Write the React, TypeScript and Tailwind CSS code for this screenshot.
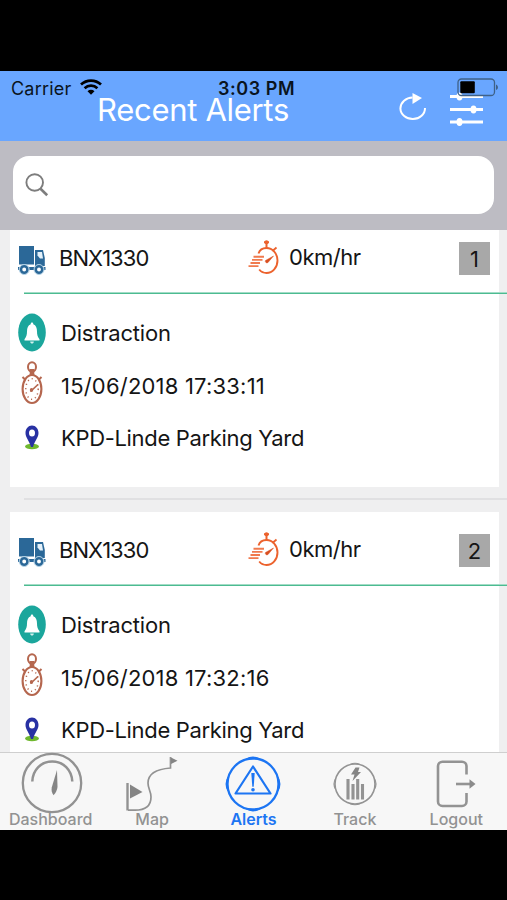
import { JSX, ReactNode } from "react";

type Alert = {
  id: number;
  vehicle: string;
  speed: string;
  type: string;
  time: string;
  place: string;
};

const alerts: Alert[] = [
  {
    id: 1,
    vehicle: "BNX1330",
    speed: "0km/hr",
    type: "Distraction",
    time: "15/06/2018 17:33:11",
    place: "KPD-Linde Parking Yard",
  },
  {
    id: 2,
    vehicle: "BNX1330",
    speed: "0km/hr",
    type: "Distraction",
    time: "15/06/2018 17:32:16",
    place: "KPD-Linde Parking Yard",
  },
];

function WifiIcon() {
  return (
    <svg width="22" height="16" viewBox="0 0 22 16" fill="none" stroke="#000" strokeWidth="2.7">
      <path d="M1 5.6a14.5 14.5 0 0 1 20 0" />
      <path d="M4.6 9.3a9.2 9.2 0 0 1 12.8 0" />
      <path d="M11 15.8l-3.5-3.6a5 5 0 0 1 7 0z" fill="#000" stroke="none" />
    </svg>
  );
}

function BatteryIcon() {
  return (
    <svg width="42" height="19" viewBox="0 0 42 19">
      <rect x="1" y="1" width="36.5" height="16.5" rx="3.5" fill="none" stroke="#3f6187" strokeWidth="1.3" />
      <rect x="3.3" y="3.3" width="14.5" height="12" rx="1" fill="#000" />
      <path d="M39 6.5c2.6 1 2.6 4.6 0 5.6z" fill="#3f6187" />
    </svg>
  );
}

function RefreshIcon() {
  return (
    <svg width="28" height="28" viewBox="0 0 28 28">
      <path d="M13.5 4.5A12.3 11.3 0 0 0 1.4 15.5a12.3 10.8 0 0 0 24.6-.5" fill="none" stroke="#fff" strokeWidth="2" />
      <path d="M13.5 0l9.5 5-9.5 6z" fill="#fff" />
    </svg>
  );
}

function SlidersIcon() {
  return (
    <svg width="33" height="36" viewBox="0 0 33 36" fill="#fff">
      <path d="M0 4h33v3H0zM0 17h33v3H0zM0 29.5h33v3H0z" />
      <ellipse cx="9.5" cy="5.5" rx="3" ry="4" />
      <ellipse cx="23.5" cy="18.5" rx="3" ry="4" />
      <ellipse cx="9.5" cy="31" rx="3" ry="4" />
    </svg>
  );
}

function SearchIcon() {
  return (
    <svg width="24" height="24" viewBox="0 0 24 24" fill="none" stroke="#7d7d7d">
      <circle cx="9.7" cy="9.5" r="8.3" strokeWidth="1.9" />
      <path d="M15.5 15.7l6.7 6.5" strokeWidth="2.6" />
    </svg>
  );
}

function TruckIcon() {
  return (
    <svg width="28" height="30" viewBox="0 0 28 30">
      <path d="M1 1h15v18.5H1z" fill="#2b6898" />
      <path d="M17 5h8l1.8 8v8H17z" fill="#2b6898" />
      <path d="M19.5 7H24l1 6.500h-3l-2.500-3z" fill="#e4f1fa" />
      <path d="M0 22h27.500v3H0z" fill="#2b6898" />
      <g fill="#fff" stroke="#a8cbe2" strokeWidth="1">
        <circle cx="6.2" cy="24.5" r="5" />
        <circle cx="21" cy="24.5" r="5" />
      </g>
      <g fill="#fff" stroke="#2b6898" strokeWidth="2.5">
        <circle cx="6.2" cy="24.5" r="3.2" />
        <circle cx="21" cy="24.5" r="3.2" />
      </g>
    </svg>
  );
}

function SpeedIcon() {
  return (
    <svg width="32" height="36" viewBox="0 0 32 36" fill="none" stroke="#ec622d" strokeWidth="1.9">
      <path d="M10.5 13.5c1-3.3 4-5.5 8-5.5 6 0 11 5.500 11 12.500S24.500 33 18.500 33c-3 0-5.500-1.300-7.300-3.500" />
      <path d="M18.5 2v6M16 2.300h5" strokeWidth="2" />
      <circle cx="18.5" cy="2.3" r="2" fill="#ec622d" stroke="none" />
      <path d="M24.5 11l4-3.500" strokeWidth="1.8" />
      <path d="M5.500 16.800H16M4 19.900h10.500M2.500 23h9.500M.5 26.100h10" stroke="#f07a4e" />
      <path d="M17.5 20.500l8-4.500-5.500 6.500c-1.500 1.200-3.300-.7-2.500-2z" fill="#d94f20" stroke="#d94f20" strokeWidth=".5" />
    </svg>
  );
}

function BellIcon() {
  return (
    <svg width="28" height="39" viewBox="0 0 28 39">
      <ellipse cx="14" cy="19.5" rx="13.8" ry="19" fill="#1ba69c" />
      <path d="M14 9.5c.9 0 1.300.7 1.300 1.700 2.700 1 3.700 3.600 3.700 7.300 0 3.500.7 5.500 2.500 7.800v1.200h-15v-1.200C8.300 24 9 22 9 18.500c0-3.700 1-6.300 3.700-7.300 0-1 .4-1.700 1.300-1.700z" fill="#fff" />
      <path d="M12.2 28.500h3.600c0 2.700-3.600 2.700-3.600 0z" fill="#d3f0ed" />
    </svg>
  );
}

function StopwatchIcon() {
  return (
    <svg width="22" height="44" viewBox="0 0 22 44" fill="none" stroke="#b5674f">
      <ellipse cx="11" cy="6" rx="4" ry="4.7" strokeWidth="2" />
      <path d="M8.7 8h4.600v6H8.700z" fill="#b5674f" stroke="none" />
      <path d="M1.5 16l3 3M20.500 16l-3 3" strokeWidth="2" />
      <ellipse cx="11" cy="28" rx="9.4" ry="14" strokeWidth="2.1" />
      <ellipse cx="11" cy="28" rx="6.2" ry="10.3" strokeWidth="1.5" strokeDasharray="1.1 3.2" />
      <path d="M9.5 30.500l7.500-7" strokeWidth="1.7" />
      <ellipse cx="10.5" cy="29" rx="1.7" ry="2" fill="#b5674f" stroke="none" />
    </svg>
  );
}

function PinIcon() {
  return (
    <svg width="14" height="25" viewBox="0 0 14 25">
      <ellipse cx="7" cy="21.5" rx="7" ry="2.8" fill="#70b82f" />
      <path d="M7 .5c3.700 0 6.500 3.300 6.500 7.500 0 4.700-3.700 7.500-5.500 14H6C4.200 15.500.5 12.700.5 8 .5 3.800 3.300.5 7 .5z" fill="#2831a3" />
      <ellipse cx="7" cy="8" rx="3" ry="3.6" fill="#fff" />
    </svg>
  );
}

function DashboardIcon() {
  return (
    <svg width="64" height="62" viewBox="0 0 64 62" fill="none" stroke="#929292">
      <circle cx="33" cy="31" r="29.2" strokeWidth="2.3" />
      <path d="M13.3 29.500C13.800 18 22 9.500 33.200 9.500S52.700 18 53.300 29.500" strokeWidth="2.5" />
      <path d="M38 18l.5 17c-.3 3-1.800 6-4 8.300-1.800-2.500-2.300-5-1.700-8z" fill="#858585" stroke="none" />
    </svg>
  );
}

function MapIcon() {
  return (
    <svg width="52" height="56" viewBox="0 0 52 56" fill="none" stroke="#929292">
      <path d="M1.5 27v27.500" strokeWidth="2.4" />
      <path d="M4 28.500l12.500 7.500L4 42.500z" fill="#858585" stroke="none" />
      <path d="M2 54.200h7c11 0 16-4.800 16-13.200 0-6-3-8-3-14 0-8.500 7-13.800 22.500-15V1" strokeWidth="1.7" />
      <path d="M45 1.500l6.500 3.300L45 8z" fill="#858585" stroke="none" />
    </svg>
  );
}

function AlertsIcon() {
  return (
    <svg width="56" height="56" viewBox="0 0 56 56" fill="none" stroke="#1c75f3">
      <circle cx="28" cy="28" r="25.5" strokeWidth="2.3" />
      <path d="M3.3 21q-4 7 0 14M52.700 21q4 7 0 14M21 3.300q7-4 14 0M21 52.700q7 4 14 0" strokeWidth="1.5" />
      <path d="M28 10.500l17.500 27h-35z" strokeWidth="2.2" strokeLinejoin="round" />
      <path d="M26.3 17h3.400l-1 13.700h-1.400z" fill="#1c75f3" stroke="none" />
      <circle cx="28" cy="33.7" r="1.8" fill="#1c75f3" stroke="none" />
    </svg>
  );
}

function TrackIcon() {
  return (
    <svg width="44" height="44" viewBox="0 0 44 44" fill="none" stroke="#939393">
      <circle cx="22" cy="22" r="20" strokeWidth="1.6" />
      <path d="M2.5 17q-3 5 0 10M41.500 17q3 5 0 10M17 2.500q5-2.500 10 0M17 41.500q5 2.500 10 0" strokeWidth="1.2" />
      <path d="M15 17v20.500M20 22v15.500M24.700 17v20.500M29.500 22v15.500" strokeWidth="3.1" />
      <path d="M22.5 5.500h4L25 10h3l-8.500 9 2-6.500H18z" fill="#858585" stroke="none" />
    </svg>
  );
}

function LogoutIcon() {
  return (
    <svg width="40" height="48" viewBox="0 0 40 48" fill="none" stroke="#939393" strokeWidth="2.6">
      <path d="M30.500 14.500V6A4.500 4.500 0 0 0 26 1.700H6.500A4.500 4.500 0 0 0 2 6v35.500A4.500 4.500 0 0 0 6.500 46H26a4.500 4.500 0 0 0 4.500-4.500V33" />
      <path d="M20 24h14" />
      <path d="M33.500 19.200l6 4.800-6 4.800z" fill="#8b8b8b" stroke="none" />
    </svg>
  );
}

function StatusBar() {
  return (
    <div className="absolute inset-x-0 top-[7px] flex h-5 items-center text-[18px] text-[#0a1420]">
      <span className="ml-[11px] mt-px w-[61px] tracking-[0.2px]">Carrier</span>
      <span className="-mt-0.5 ml-2">
        <WifiIcon />
      </span>
      <span className="ml-[116px] mt-px font-semibold tracking-[0.55px]">3:03 PM</span>
      <span className="absolute right-[8px] top-0">
        <BatteryIcon />
      </span>
    </div>
  );
}

function DetailRow({ icon, children, className }: { icon: ReactNode; children: ReactNode; className: string }) {
  return (
    <div className={`flex items-center ${className}`}>
      <div className="flex w-[44px] shrink-0 justify-center">{icon}</div>
      <span className="ml-[7px]">{children}</span>
    </div>
  );
}

function AlertCard({ alert }: { alert: Alert }) {
  return (
    <div className="h-[292px]">
      <div className="ml-2.5 mr-2 h-[267px] bg-white">
        <div className="flex h-[72px] items-center pt-1">
          <div className="ml-2 mt-1 w-[41px]">
            <TruckIcon />
          </div>
          <span className="w-[189px] tracking-[-0.95px]">{alert.vehicle}</span>
          <div className="w-[41px]">
            <SpeedIcon />
          </div>
          <span className="-mt-0.5 tracking-[-0.5px]">{alert.speed}</span>
          <span className="ml-auto mr-[9px] mt-px flex h-[33px] w-[31px] items-center justify-center bg-[#a8a8a8]">
            {alert.id}
          </span>
        </div>
        <div className="-mr-2 ml-3.5 h-[2px] border-b border-[#4cbb91] bg-[#a3dcc6]" />
        <DetailRow icon={<BellIcon />} className="mt-[18px] h-[40px] tracking-[-0.2px] *:last:mt-[2px]">
          {alert.type}
        </DetailRow>
        <DetailRow icon={<StopwatchIcon />} className="mt-[9px] h-[44px] tracking-[0.2px] *:last:mt-[5px]">
          {alert.time}
        </DetailRow>
        <DetailRow icon={<PinIcon />} className="mt-[17px] h-[30px] tracking-[-0.33px] *:last:mt-[2px]">
          {alert.place}
        </DetailRow>
      </div>
      <div className="ml-6 mt-[11px] h-[2px] bg-[#e0e0e2]" />
    </div>
  );
}

const tabs = [
  { label: "Dashboard", icon: <DashboardIcon />, iconClass: "pt-0.5" },
  { label: "Map", icon: <MapIcon />, iconClass: "pt-1" },
  { label: "Alerts", icon: <AlertsIcon />, iconClass: "pt-1", active: true },
  { label: "Track", icon: <TrackIcon />, iconClass: "pt-1" },
  { label: "Logout", icon: <LogoutIcon />, iconClass: "pt-1" },
];

export default function App(): JSX.Element {
  return (
    <div className="flex h-[900px] w-[507px] flex-col overflow-hidden bg-black pb-[70px] pt-[71px] font-['Inter',sans-serif] text-[22px] leading-none text-[#151515]">
      <header className="relative h-[70px] shrink-0 bg-[#69a6ff]">
        <div className="flex h-full items-center pt-1.5 text-white">
          <h1 className="ml-[97px] w-[302px] whitespace-nowrap text-[31px] font-normal tracking-[-0.3px]">
            Recent Alerts
          </h1>
          <div className="-mt-1 w-[51px]">
            <RefreshIcon />
          </div>
          <SlidersIcon />
        </div>
        <StatusBar />
      </header>
      <div className="h-[89px] shrink-0 bg-[#bdbcc3] px-[13px] pt-[15px]">
        <div className="flex h-[58px] items-center rounded-[16px] bg-white pl-3">
          <SearchIcon />
        </div>
      </div>
      <main className="min-h-0 flex-1 overflow-hidden bg-[#efeff0]">
        <div className="-mt-2.5">
          {alerts.map((alert) => (
            <AlertCard key={alert.id} alert={alert} />
          ))}
        </div>
      </main>
      <nav className="grid h-[78px] shrink-0 grid-cols-5 border-t border-[#cfcfcf] bg-[#f7f7f7]">
        {tabs.map((tab) => (
          <div
            key={tab.label}
            className={`flex flex-col items-center text-[16px] ${tab.active ? "font-semibold text-[#1c75f3]" : "font-medium text-[#929292]"}`}
          >
            <div className={`flex h-[58px] items-center justify-center ${tab.iconClass}`}>{tab.icon}</div>
            <span>{tab.label}</span>
          </div>
        ))}
      </nav>
    </div>
  );
}
